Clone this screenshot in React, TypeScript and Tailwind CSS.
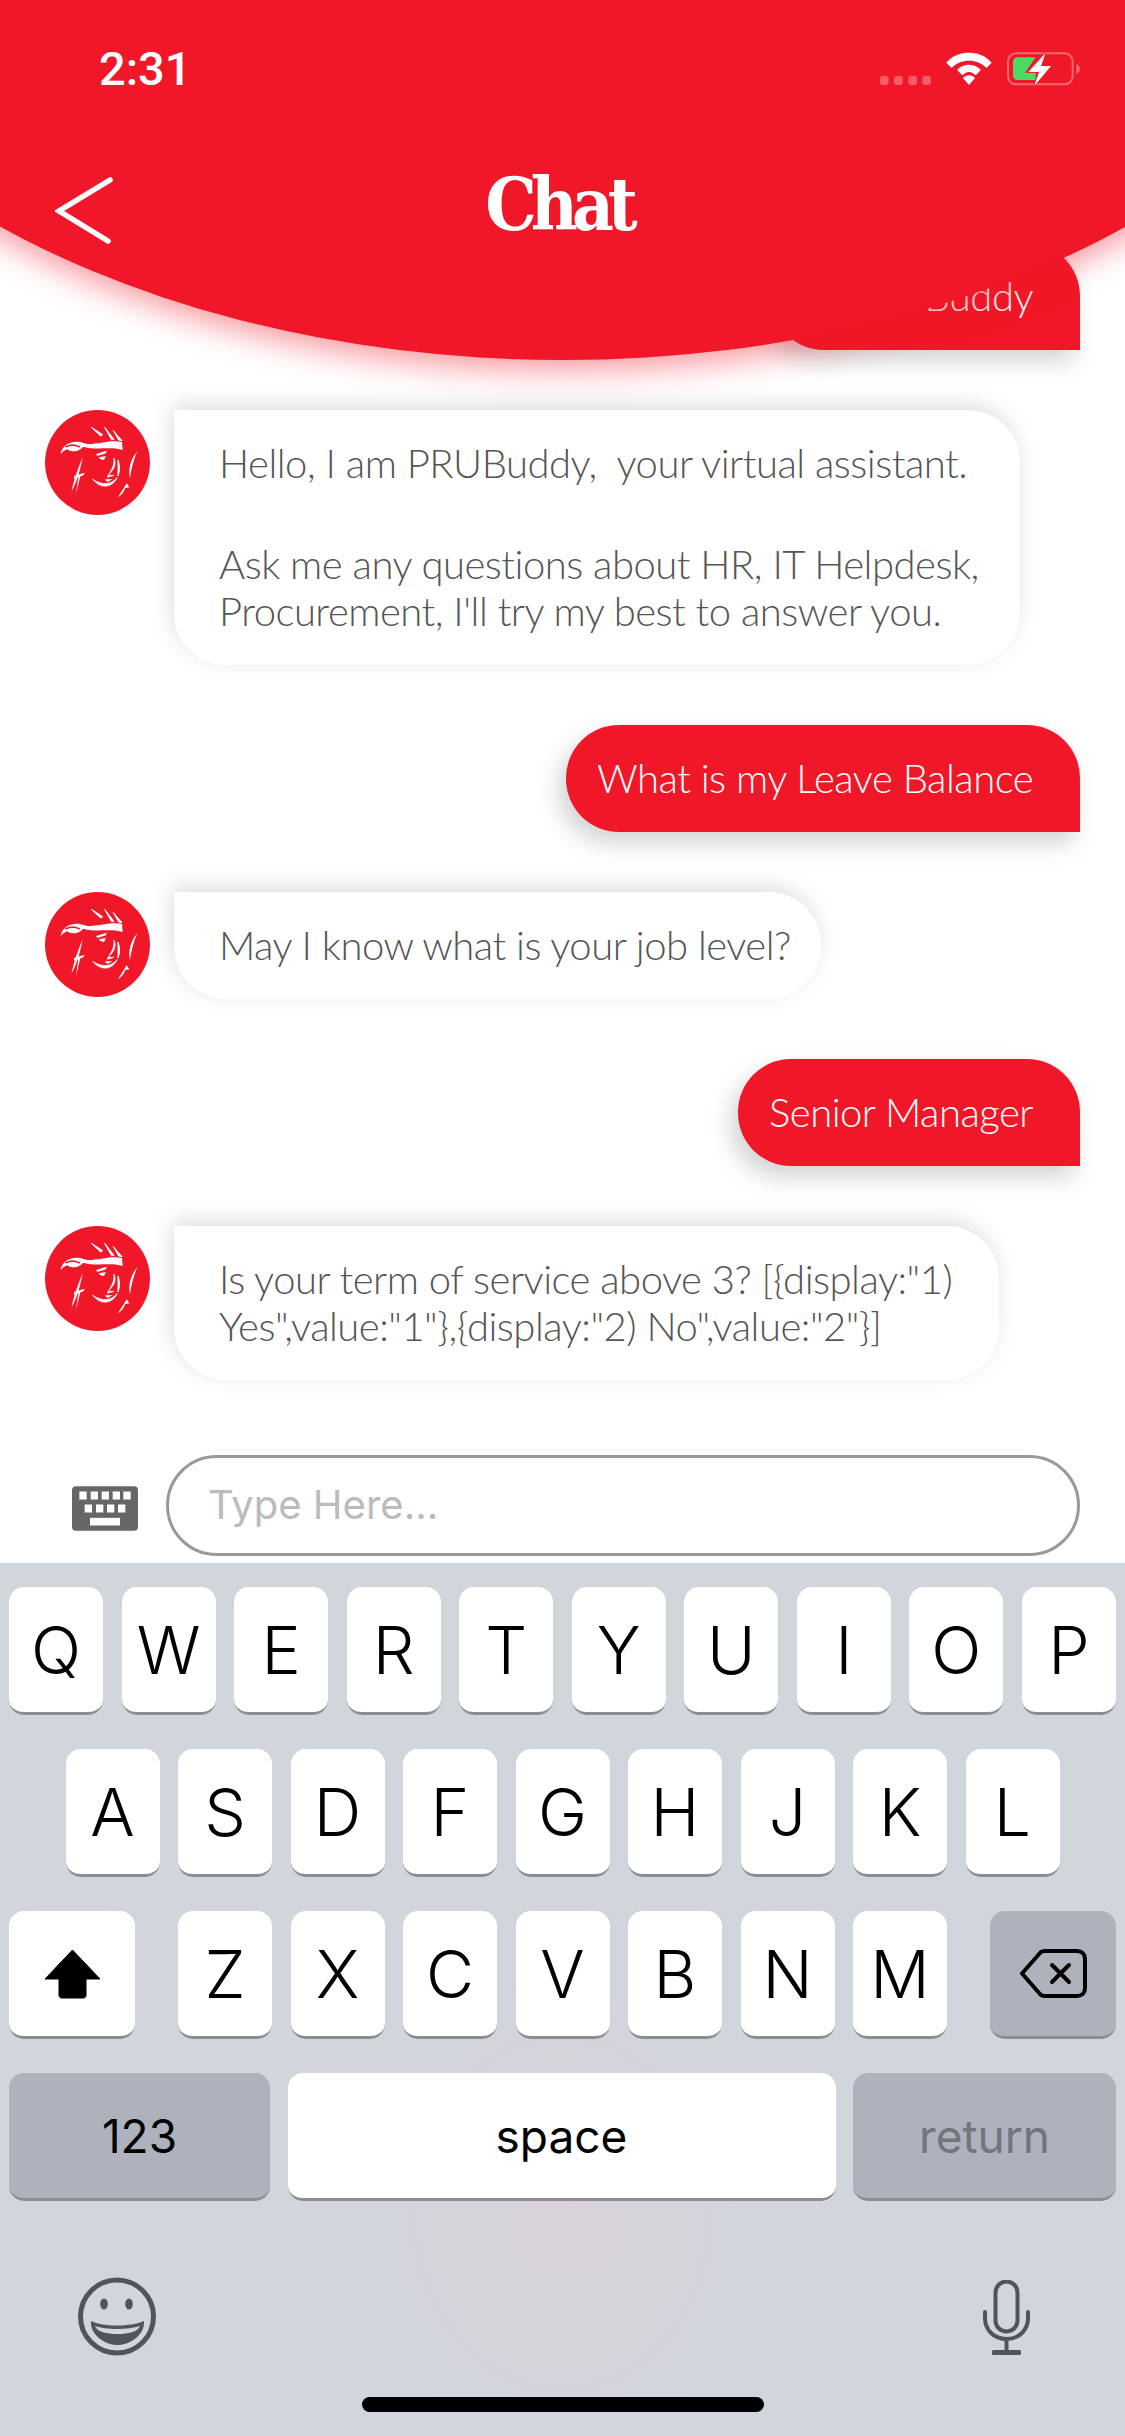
const rows = ['QWERTYUIOP', 'ASDFGHJKL', 'ZXCVBNM']

function Avatar() {
  return (
    <div className="w-[105px] h-[105px] shrink-0 rounded-full bg-[#f01828]">
      <svg viewBox="45 30 315 315" className="w-full h-full" fill="#fff" stroke="none">
        {/* ribbon and headband */}
        <path d="M92 162C94 140 118 122 150 126L172 132C200 134 240 118 276 126L278 150C240 138 200 152 160 140C146 156 124 158 112 148C104 150 98 156 92 162Z" />
        <path d="M108 140C120 134 134 134 148 140" fill="none" stroke="#f01828" strokeWidth="5" strokeLinecap="round" />
        {/* hair above the band */}
        <path d="M184 82L218 104L212 108ZM224 82L252 118L244 118ZM250 92L276 122L266 120Z" stroke="#fff" strokeWidth="3" strokeLinejoin="round" />
        {/* eye, nose, lips, jaw */}
        <path d="M198 162L230 152L228 160L202 168ZM206 172L228 168L222 180L212 178Z" />
        <path d="M252 174C262 196 248 212 234 226L252 226L232 232C238 216 254 202 252 174Z" stroke="#fff" strokeWidth="2" />
        <path d="M224 238L248 238L232 246Z" />
        <path d="M188 238C214 256 244 256 262 232C248 264 212 268 188 238Z" stroke="#fff" strokeWidth="2" />
        <path d="M264 180C270 196 270 212 264 228C265 212 264 196 264 180Z" stroke="#fff" strokeWidth="3" />
        {/* side locks */}
        <path d="M322 154C312 176 304 206 300 234C294 208 302 176 322 154Z" />
        <path d="M264 292C274 276 280 266 290 250L298 262L286 264C282 276 274 286 264 292Z" />
        <path d="M158 172C152 200 146 236 124 276C132 240 144 204 158 172ZM132 228L164 218L160 226L132 236ZM138 282L146 224L152 224Z" />
      </svg>
    </div>
  )
}

function StatusBar() {
  return (
    <div className="flex justify-between items-start h-[100px] pl-[99px] pr-[36px] pt-[40px]">
      <span className="font-['Roboto'] font-medium text-[47px] leading-[58px] text-white">2:31</span>
      <svg viewBox="0 0 660 180" className="w-[220px] h-[60px]">
        <g fill="#fff" fillOpacity="0.3">
          <rect x="33" y="108" width="26" height="27" rx="9" />
          <rect x="75" y="108" width="26" height="27" rx="9" />
          <rect x="118" y="108" width="26" height="27" rx="9" />
          <rect x="160" y="108" width="26" height="27" rx="9" />
        </g>
        <path d="M300 38C346 38 366 66 368 68L352 84C338 68 320 62 300 62C280 62 262 68 248 84L232 68C234 66 254 38 300 38ZM300 74C322 74 334 88 336 90L320 106C314 100 308 96 300 96C292 96 286 100 280 106L264 90C266 88 278 74 300 74ZM300 106C308 106 314 110 318 114L300 135L282 114C286 110 292 106 300 106Z" fill="#fff" />
        <rect x="417" y="40" width="194" height="93" rx="24" fill="none" stroke="#fff" strokeOpacity="0.35" strokeWidth="6" />
        <path d="M622 72C630 76 633 82 633 87C633 92 630 98 622 102Z" fill="#fff" fillOpacity="0.35" />
        <path d="M445 52H500L468 98L500 98V120H445C438 120 432 114 432 107V65C432 58 438 52 445 52Z" fill="#4cd964" />
        <path d="M530 38L478 96H510L496 138L546 78H516Z" fill="#fff" stroke="#f01828" strokeWidth="5" paintOrder="stroke" />
      </svg>
    </div>
  )
}

function Header() {
  return (
    <div className="absolute top-0 left-0 w-full h-[420px] overflow-hidden">
      <div className="absolute left-1/2 -translate-x-1/2 top-[-704px] w-[1700px] h-[1064px] rounded-[50%] bg-[#f01828] shadow-[0_10px_32px_rgba(240,24,40,0.45)]" />
      <div className="relative">
        <StatusBar />
        <div className="relative h-[120px] mt-[45px] flex justify-center items-center">
          <svg viewBox="0 0 60 70" className="absolute left-[55px] top-[31px] w-[60px] h-[70px]">
            <path d="M55 4L4 35L53 65" fill="none" stroke="#fff" strokeWidth="5.500" strokeLinecap="round" />
          </svg>
          <h1 className="font-['DejaVu_Serif'] [font-stretch:condensed] font-bold text-[72px] leading-[80px] tracking-[-6px] mr-[8px] text-white">Chat</h1>
        </div>
      </div>
    </div>
  )
}

function BotBubble({ children, className }: { children: React.ReactNode; className?: string }) {
  return (
    <div className="flex items-start gap-[24px] pl-[45px]">
      <Avatar />
      <div className={`bg-white rounded-[52px] rounded-tl-none pl-[45px] pr-[30px] py-[30px] font-['Lato'] font-light text-[40px] tracking-[-0.5px] leading-[47px] text-[#555] shadow-[-3px_-6px_22px_rgba(0,0,0,0.13)] ${className ?? ''}`}>
        {children}
      </div>
    </div>
  )
}

function UserBubble({ text }: { text: string }) {
  return (
    <div className="flex justify-end pr-[45px]">
      <div className="bg-[#f01828] rounded-[53px] rounded-br-none pl-[31px] pr-[47px] py-[30px] font-['Lato'] font-light text-[40px] tracking-[-0.5px] leading-[47px] text-white whitespace-pre shadow-[-7px_11px_24px_rgba(0,0,0,0.18)]">
        {text}
      </div>
    </div>
  )
}

function Key({ label, className }: { label: string; className?: string }) {
  return (
    <div className={`w-[94px] h-[128px] rounded-[15px] bg-white border-b-[3px] border-[#8b8d92] flex items-center justify-center font-['Inter'] font-[350] text-[66px] leading-none text-black ${className ?? ''}`}>
      {label}
    </div>
  )
}

function Keyboard() {
  return (
    <div className="h-[873px] pt-[24px] bg-[#d1d5dc] bg-[radial-gradient(ellipse_200px_240px_at_562px_650px,#d9d2d8,#d1d5dc)] flex flex-col">
      <div className="flex flex-col gap-[34px] px-[9px]">
        <div className="flex justify-between">
          {rows[0].split('').map((k) => <Key key={k} label={k} />)}
        </div>
        <div className="flex justify-center gap-[18.5px]">
          {rows[1].split('').map((k) => <Key key={k} label={k} />)}
        </div>
        <div className="flex justify-between">
          <div className="w-[126px] h-[128px] rounded-[15px] bg-white border-b-[3px] border-[#8b8d92] flex items-center justify-center">
            <svg viewBox="0 0 57 50" className="w-[57px] h-[50px]">
              <path d="M28.5 1L56 30H42V46C42 48 41 49 39 49H18C16 49 15 48 15 46V30H1Z" fill="#000" strokeLinejoin="round" stroke="#000" strokeWidth="1" />
            </svg>
          </div>
          <div className="flex gap-[18.5px]">
            {rows[2].split('').map((k) => <Key key={k} label={k} />)}
          </div>
          <div className="w-[126px] h-[128px] rounded-[15px] bg-[#adb2bc] border-b-[3px] border-[#8b8d92] flex items-center justify-center">
            <svg viewBox="0 0 68 49" className="w-[68px] h-[49px]">
              <path d="M3 24.5L21 4C22 2.700 24 2 26 2H58C63 2 66 5 66 10V39C66 44 63 47 58 47H26C24 47 22 46.300 21 45Z" fill="none" stroke="#000" strokeWidth="4" strokeLinejoin="round" />
              <path d="M33 16L50 33M50 16L33 33" stroke="#000" strokeWidth="4" strokeLinecap="round" />
            </svg>
          </div>
        </div>
        <div className="flex justify-between font-['Inter'] text-[46px] leading-none">
          <div className="w-[261px] h-[128px] rounded-[15px] bg-[#adb2bc] border-b-[3px] border-[#8b8d92] flex items-center justify-center text-black">123</div>
          <div className="w-[548px] h-[128px] rounded-[15px] bg-white border-b-[3px] border-[#8b8d92] flex items-center justify-center text-black">space</div>
          <div className="w-[263px] h-[128px] rounded-[15px] bg-[#adb2bc] border-b-[3px] border-[#8b8d92] flex items-center justify-center text-[#71757c]">return</div>
        </div>
      </div>
      <div className="flex justify-between items-start pl-[78px] pr-[95px] pt-[76px]">
        <svg viewBox="0 0 78 79" className="w-[78px] h-[79px]">
          <circle cx="39" cy="39.500" r="36.500" fill="none" stroke="#50545c" strokeWidth="5" />
          <ellipse cx="26" cy="27" rx="3.800" ry="5.500" fill="#50545c" />
          <ellipse cx="51" cy="27" rx="3.800" ry="5.500" fill="#50545c" />
          <path d="M13 44C25 50 53 50 66 44C67 58 52 68 39.500 68C27 68 12 58 13 44Z" fill="#50545c" />
          <path d="M17 49C28 53 50 53 62 49C60 55 50 57 39.500 57C29 57 19 55 17 49Z" fill="#d1d5dc" />
        </svg>
        <svg viewBox="0 0 47 75" className="w-[47px] h-[75px] mt-[3px]" fill="none" stroke="#50545c">
          <rect x="12.500" y="1.500" width="22" height="50" rx="11" strokeWidth="4" />
          <path d="M2 32V38C2 50 11 59 23.500 59C36 59 45 50 45 38V32" strokeWidth="4" strokeLinecap="round" />
          <path d="M23.500 59V71" strokeWidth="4" />
          <rect x="9" y="70" width="29" height="5" rx="1.500" fill="#50545c" stroke="none" />
        </svg>
      </div>
      <div className="w-[402px] h-[15px] mt-[41px] mx-auto rounded-full bg-black" />
    </div>
  )
}

export default function App() {
  return (
    <div className="relative w-[1125px] h-[2436px] overflow-hidden bg-white flex flex-col">
      <main className="h-[1455px] shrink-0 pt-[243px] flex flex-col gap-[60px]">
        <UserBubble text="Hi PRUBuddy" />
        <BotBubble className="w-[846px]">
          <p className="whitespace-pre">Hello, I am PRUBuddy,  your virtual assistant.</p>
          <p className="mt-[54px] whitespace-pre">{"Ask me any questions about HR, IT Helpdesk,\nProcurement, I'll try my best to answer you."}</p>
        </BotBubble>
        <UserBubble text="What is my Leave Balance" />
        <BotBubble>May I know what is your job level?</BotBubble>
        <UserBubble text="Senior Manager" />
        <BotBubble className="w-[825px]">
          <p className="whitespace-pre">{'Is your term of service above 3? [{display:"1)\nYes",value:"1"},{display:"2) No",value:"2"}]'}</p>
        </BotBubble>
      </main>
      <div className="flex items-center h-[101px] pl-[72px] pr-[45px] mb-[7px] gap-[28px]">
        <svg viewBox="216 252 198 134" className="w-[66px] h-[45px] shrink-0 mt-[5px]">
          <rect x="216" y="252" width="198" height="134" rx="12" fill="#666" />
          <g fill="#fff">
            <rect x="238" y="268" width="22" height="24" />
            <rect x="272" y="268" width="22" height="24" />
            <rect x="305" y="268" width="22" height="24" />
            <rect x="338" y="268" width="22" height="24" />
            <rect x="370" y="268" width="22" height="24" />
            <rect x="254" y="307" width="22" height="24" />
            <rect x="288" y="307" width="22" height="24" />
            <rect x="321" y="307" width="22" height="24" />
            <rect x="354" y="307" width="22" height="24" />
            <rect x="270" y="347" width="90" height="23" />
          </g>
        </svg>
        <div className="flex-1 h-[101px] rounded-full border-[3px] border-[#999] pl-[39px] pb-[2px] flex items-center font-['Inter'] text-[40px] text-[#bbb]">
          Type Here...
        </div>
      </div>
      <Keyboard />
      <Header />
    </div>
  )
}
